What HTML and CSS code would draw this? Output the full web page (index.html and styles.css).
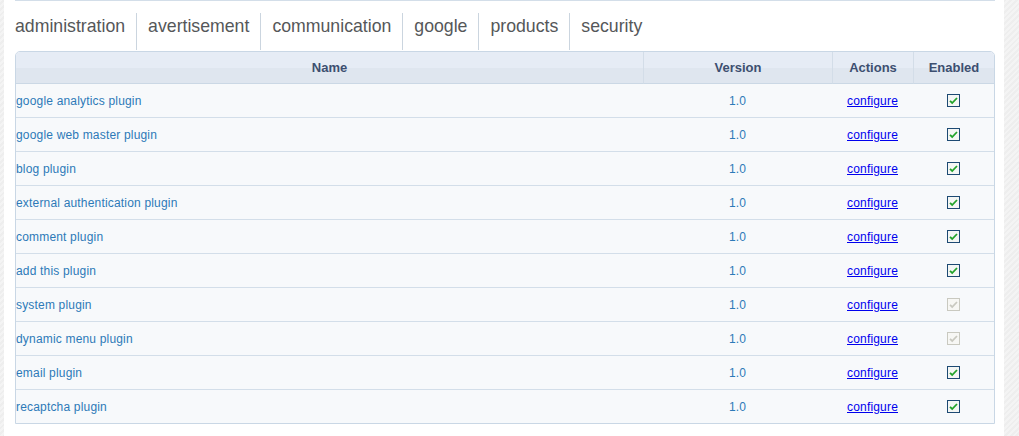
FILE: index.html
```html
<!DOCTYPE html>
<html>
<head>
<meta charset="utf-8">
<link rel="stylesheet" href="styles.css">
</head>
<body>
<div class="page">
  <div class="content">
    <div class="topline"></div>
    <ul class="tabs">
      <li class="tab first">administration</li>
      <li class="tab">avertisement</li>
      <li class="tab">communication</li>
      <li class="tab">google</li>
      <li class="tab">products</li>
      <li class="tab">security</li>
    </ul>
    <table class="plugins">
      <colgroup>
        <col class="c-name"><col class="c-ver"><col class="c-act"><col class="c-en">
      </colgroup>
      <thead>
        <tr><th>Name</th><th>Version</th><th>Actions</th><th>Enabled</th></tr>
      </thead>
      <tbody>
        <tr><td class="name">google analytics plugin</td><td class="ver">1.0</td><td class="act"><a href="#">configure</a></td><td class="en"><svg class="cb" width="13" height="13" viewBox="0 0 13 13"><rect x="0.5" y="0.5" width="12" height="12" fill="#f4f6f4" stroke="#1d4a73"/><path d="M3 6.8 L5.2 9 L10 4" fill="none" stroke="#22a32a" stroke-width="1.8"/></svg></td></tr>
        <tr><td class="name">google web master plugin</td><td class="ver">1.0</td><td class="act"><a href="#">configure</a></td><td class="en"><svg class="cb" width="13" height="13" viewBox="0 0 13 13"><rect x="0.5" y="0.5" width="12" height="12" fill="#f4f6f4" stroke="#1d4a73"/><path d="M3 6.8 L5.2 9 L10 4" fill="none" stroke="#22a32a" stroke-width="1.8"/></svg></td></tr>
        <tr><td class="name">blog plugin</td><td class="ver">1.0</td><td class="act"><a href="#">configure</a></td><td class="en"><svg class="cb" width="13" height="13" viewBox="0 0 13 13"><rect x="0.5" y="0.5" width="12" height="12" fill="#f4f6f4" stroke="#1d4a73"/><path d="M3 6.8 L5.2 9 L10 4" fill="none" stroke="#22a32a" stroke-width="1.8"/></svg></td></tr>
        <tr><td class="name">external authentication plugin</td><td class="ver">1.0</td><td class="act"><a href="#">configure</a></td><td class="en"><svg class="cb" width="13" height="13" viewBox="0 0 13 13"><rect x="0.5" y="0.5" width="12" height="12" fill="#f4f6f4" stroke="#1d4a73"/><path d="M3 6.8 L5.2 9 L10 4" fill="none" stroke="#22a32a" stroke-width="1.8"/></svg></td></tr>
        <tr><td class="name">comment plugin</td><td class="ver">1.0</td><td class="act"><a href="#">configure</a></td><td class="en"><svg class="cb" width="13" height="13" viewBox="0 0 13 13"><rect x="0.5" y="0.5" width="12" height="12" fill="#f4f6f4" stroke="#1d4a73"/><path d="M3 6.8 L5.2 9 L10 4" fill="none" stroke="#22a32a" stroke-width="1.8"/></svg></td></tr>
        <tr><td class="name">add this plugin</td><td class="ver">1.0</td><td class="act"><a href="#">configure</a></td><td class="en"><svg class="cb" width="13" height="13" viewBox="0 0 13 13"><rect x="0.5" y="0.5" width="12" height="12" fill="#f4f6f4" stroke="#1d4a73"/><path d="M3 6.8 L5.2 9 L10 4" fill="none" stroke="#22a32a" stroke-width="1.8"/></svg></td></tr>
        <tr><td class="name">system plugin</td><td class="ver">1.0</td><td class="act"><a href="#">configure</a></td><td class="en"><svg class="cb" width="13" height="13" viewBox="0 0 13 13"><rect x="0.5" y="0.5" width="12" height="12" fill="#f7f7f4" stroke="#c9c9c0"/><path d="M3 6.8 L5.2 9 L10 4" fill="none" stroke="#c9c9c0" stroke-width="1.8"/></svg></td></tr>
        <tr><td class="name">dynamic menu plugin</td><td class="ver">1.0</td><td class="act"><a href="#">configure</a></td><td class="en"><svg class="cb" width="13" height="13" viewBox="0 0 13 13"><rect x="0.5" y="0.5" width="12" height="12" fill="#f7f7f4" stroke="#c9c9c0"/><path d="M3 6.8 L5.2 9 L10 4" fill="none" stroke="#c9c9c0" stroke-width="1.8"/></svg></td></tr>
        <tr><td class="name">email plugin</td><td class="ver">1.0</td><td class="act"><a href="#">configure</a></td><td class="en"><svg class="cb" width="13" height="13" viewBox="0 0 13 13"><rect x="0.5" y="0.5" width="12" height="12" fill="#f4f6f4" stroke="#1d4a73"/><path d="M3 6.8 L5.2 9 L10 4" fill="none" stroke="#22a32a" stroke-width="1.8"/></svg></td></tr>
        <tr><td class="name">recaptcha plugin</td><td class="ver">1.0</td><td class="act"><a href="#">configure</a></td><td class="en"><svg class="cb" width="13" height="13" viewBox="0 0 13 13"><rect x="0.5" y="0.5" width="12" height="12" fill="#f4f6f4" stroke="#1d4a73"/><path d="M3 6.8 L5.2 9 L10 4" fill="none" stroke="#22a32a" stroke-width="1.8"/></svg></td></tr>
      </tbody>
    </table>
  </div>
</div>
</body>
</html>
```
FILE: styles.css
```css
html, body {
  margin: 0;
  padding: 0;
  height: 100%;
}
body {
  font-family: "Liberation Sans", Arial, sans-serif;
  background: #efefef repeating-linear-gradient(135deg, #f4f4f4 0 2px, #eeeeee 2px 4px);
  overflow: hidden;
}
.page {
  margin-left: 4px;
  width: 1000px;
  height: 100%;
  background: #ffffff;
}
.content {
  padding: 0 9px 0 11px;
}
.topline {
  height: 1px;
  background: #d3dee9;
}
.tabs {
  list-style: none;
  margin: 12px 0 0 0;
  padding: 0;
  display: flex;
  height: 37px;
}
.tab {
  font-size: 17.7px;
  line-height: 22px;
  padding: 2px 11px 0 11px;
  color: #555759;
  border-left: 1px solid #cbd5df;
}
.tab.first {
  border-left: none;
  padding-left: 0;
}
.plugins {
  margin-top: 1px;
  width: 980px;
  table-layout: fixed;
  border-collapse: separate;
  border-spacing: 0;
  border: 1px solid #c9d7e5;
  border-radius: 5px 5px 0 0;
  overflow: hidden;
}
.c-name { width: 627px; }
.c-ver { width: 189px; }
.c-act { width: 81px; }
.c-en { width: 81px; }
.plugins th {
  height: 31px;
  padding: 0;
  font-size: 13px;
  font-weight: bold;
  color: #3d4f70;
  text-align: center;
  background: linear-gradient(#e6ecf5 0, #e6ecf5 16px, #dfe6ef 16px, #dfe6ef 100%);
  border-bottom: 1px solid #cbd8e5;
  border-left: 1px solid #d3dde8;
}
.plugins th:first-child {
  border-left: none;
}
.plugins td {
  height: 33px;
  padding: 0;
  font-size: 12px;
  letter-spacing: 0.18px;
  background: #f7f9fb;
  color: #2d7ab8;
  border-top: 1px solid #d3dee9;
  vertical-align: middle;
}
.plugins tbody tr:first-child td {
  border-top: none;
}
.plugins td.name {
  text-align: left;
}
.plugins td.ver,
.plugins td.act,
.plugins td.en {
  text-align: center;
}
.plugins td.act a {
  color: #0000ee;
  text-decoration: underline;
}
.cb {
  display: block;
  margin: 0 auto;
}
```
